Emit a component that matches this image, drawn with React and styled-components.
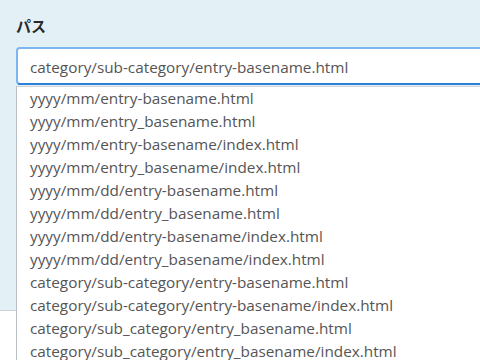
import React from "react";
import styled, { createGlobalStyle } from "styled-components";

const GlobalStyle = createGlobalStyle`
  body {
    margin: 0;
    background: #ffffff;
    font-family: "Open Sans", "Noto Sans CJK JP", sans-serif;
    overflow: hidden;
  }
`;

const Page = styled.div`
  position: relative;
  width: 480px;
  height: 360px;
  overflow: hidden;
`;

const Panel = styled.section`
  height: 311px;
  background: #e3f1f6;
  border-bottom: 1px solid #c9d3d8;
  padding: 16px 0 0 16px;
  box-sizing: border-box;
`;

const Label = styled.h2`
  margin: 0 0 11px;
  font-size: 15px;
  font-weight: 700;
  color: #2a2a2a;
  font-family: "Noto Sans CJK JP", sans-serif;
  line-height: 20px;
`;

const Field = styled.div`
  position: relative;
`;

const Input = styled.input`
  display: block;
  width: 520px;
  height: 38px;
  box-sizing: border-box;
  padding: 1px 12px 0;
  border: 2px solid #79b6f2;
  border-bottom-color: #2e7fd6;
  border-radius: 4px 0 0 4px;
  background: #fff;
  font-family: inherit;
  font-size: 15.3px;
  color: #555;
  outline: none;
`;

const Options = styled.ul`
  position: absolute;
  top: 39px;
  left: 0;
  width: 520px;
  margin: 0;
  padding: 0;
  list-style: none;
  background: #fff;
  border-left: 1px solid #b9bfc3;
  border-top: 1px solid #cfd3d6;
`;

const Option = styled.li`
  height: 23px;
  line-height: 23px;
  padding-left: 13px;
  font-size: 15.3px;
  color: #555;
  white-space: nowrap;
`;

const options = [
  "yyyy/mm/entry-basename.html",
  "yyyy/mm/entry_basename.html",
  "yyyy/mm/entry-basename/index.html",
  "yyyy/mm/entry_basename/index.html",
  "yyyy/mm/dd/entry-basename.html",
  "yyyy/mm/dd/entry_basename.html",
  "yyyy/mm/dd/entry-basename/index.html",
  "yyyy/mm/dd/entry_basename/index.html",
  "category/sub-category/entry-basename.html",
  "category/sub-category/entry-basename/index.html",
  "category/sub_category/entry_basename.html",
  "category/sub_category/entry_basename/index.html",
];

export default function App() {
  return (
    <Page>
      <GlobalStyle />
      <Panel>
        <Label>パス</Label>
        <Field>
          <Input readOnly value="category/sub-category/entry-basename.html" />
          <Options>
            {options.map((o) => (
              <Option key={o}>{o}</Option>
            ))}
          </Options>
        </Field>
      </Panel>
    </Page>
  );
}
